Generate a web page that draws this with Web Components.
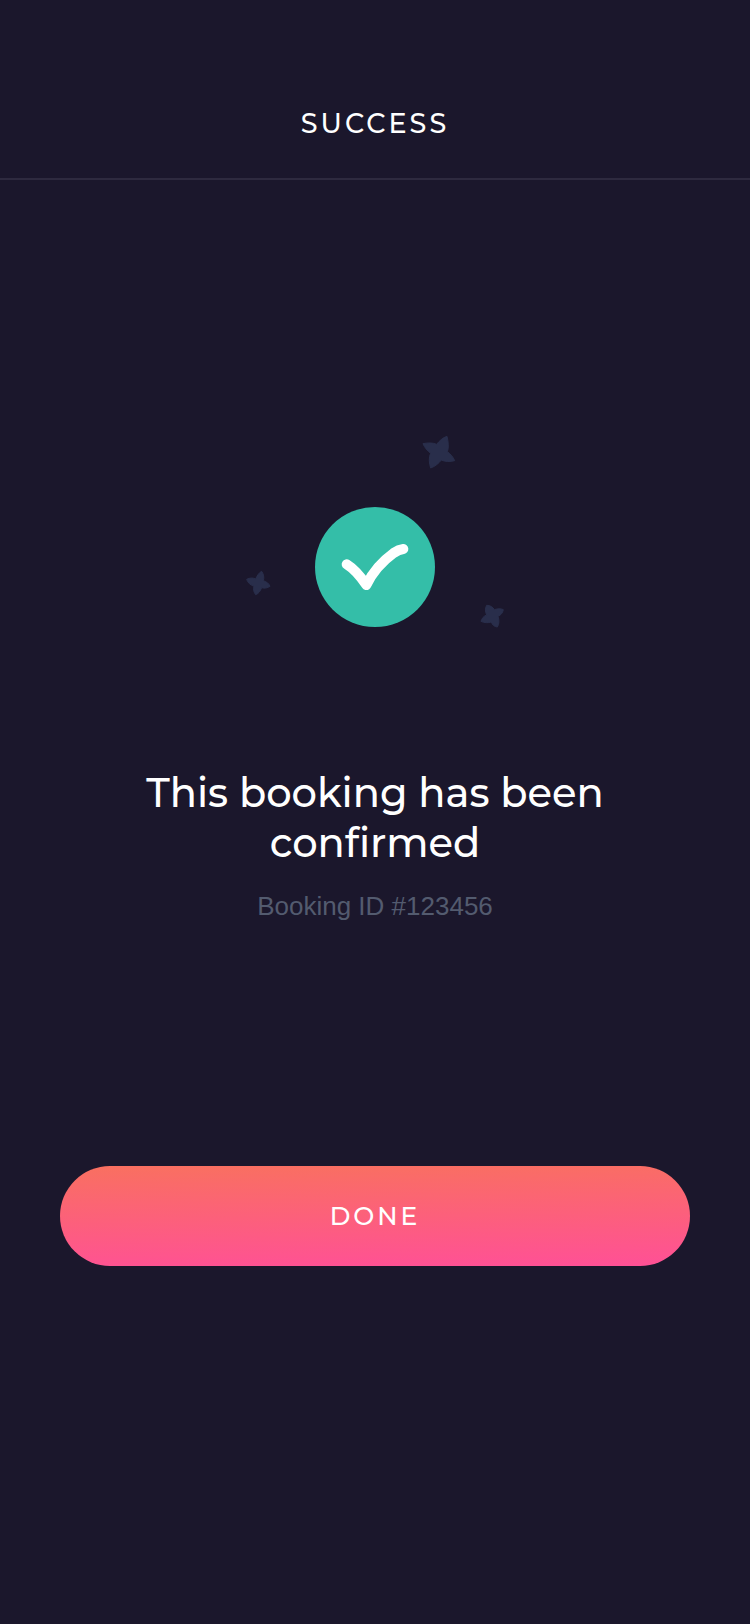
<!DOCTYPE html>
<html lang="en">
<head>
<meta charset="utf-8">
<meta name="viewport" content="width=device-width, initial-scale=1">
<title>Success</title>
<style>
html { background: #1b172c; }
body { margin: 0; color: #fff; font-family: Montserrat, Inter, sans-serif; }
</style>
</head>
<body>
<booking-success>
  <app-header slot="header">SUCCESS</app-header>
  <success-mark></success-mark>
  <booking-message>This booking has been confirmed<span slot="detail">Booking ID #123456</span></booking-message>
  <action-button slot="action">DONE</action-button>
</booking-success>
<script>
const define = (name, markup) => {
  const template = document.createElement('template');
  template.innerHTML = markup;
  customElements.define(name, class extends HTMLElement {
    constructor() {
      super();
      this.attachShadow({ mode: 'open' }).append(template.content.cloneNode(true));
    }
  });
};

define('booking-success', `
<style>
:host { display: flex; flex-direction: column; min-height: 100vh; }
main { display: flex; flex-direction: column; padding: 255px 60px 60px; }
.action { margin-top: 240px; }
</style>
<slot name="header"></slot>
<main><slot></slot><div class="action"><slot name="action"></slot></div></main>`);

define('app-header', `
<style>
:host { display: block; }
header { padding: 104px 60px 34px; border-bottom: 2px solid #2e2a3f; text-align: center; }
h1 { margin: 0; font-size: 27px; line-height: 40px; font-weight: 500; letter-spacing: 3px; }
</style>
<header><h1><slot></slot></h1></header>`);

define('success-mark', `
<style>
:host { display: block; align-self: center; width: 260px; }
svg { display: block; width: 100%; height: auto; }
</style>
<svg viewBox="0 0 260 194" role="img" aria-label="Confirmed">
  <g fill="#292e4b" stroke="#292e4b" stroke-width="3" stroke-linejoin="round">
    <path transform="translate(165 -10) scale(.33333)" d="M39 56C52 53 70 53 80 58C88 48 98 38 111 34C115 50 117 70 112 80C123 88 129 96 134 107C120 111 104 110 94 105C86 115 76 124 62 129C57 115 56 95 62 85C52 77 44 68 39 56Z"/>
    <path transform="translate(-10 125) scale(.33333)" d="M35 58C45 53 55 53 62 57C67 46 72 38 80 34C86 42 88 53 85 62C96 66 102 71 105 79C97 84 88 86 80 83C76 93 71 101 62 104C56 96 54 87 57 79C46 75 38 68 35 58Z"/>
    <path transform="translate(225 160) scale(.33333)" d="M50 31C60 31 69 36 73 44C83 41 92 40 100 44C98 54 93 60 84 64C88 75 88 87 82 96C73 95 67 90 64 81C54 84 43 84 33 79C36 70 41 63 50 60C45 49 45 40 50 31Z"/>
  </g>
  <circle cx="130" cy="132" r="60" fill="#34bea8"/>
  <path transform="translate(60 62) scale(.33333)" d="M125 202Q154 220 184 264Q212 207 266 168Q281 158 295 156" fill="none" stroke="#fff" stroke-width="30" stroke-linecap="round" stroke-linejoin="round"/>
</svg>`);

define('booking-message', `
<style>
:host { display: block; align-self: center; max-width: 520px; margin-top: 139px; text-align: center; }
h2 { margin: 0; font-size: 40px; line-height: 50px; font-weight: 500; font-variant-ligatures: none; }
p { margin: 18px 0 0; color: #535b6f; font-family: "Liberation Sans", Arial, sans-serif; font-size: 26px; line-height: 40px; }
</style>
<h2><slot></slot></h2>
<p><slot name="detail"></slot></p>`);

define('action-button', `
<style>
:host { display: block; }
button { display: block; width: 100%; padding: 30px; border: 0; border-radius: 50px; color: #fff; background: linear-gradient(179deg, #f97060, #ff5096); font: inherit; font-size: 25px; line-height: 40px; font-weight: 500; letter-spacing: 3px; cursor: pointer; }
</style>
<button type="button"><slot></slot></button>`);
</script>
</body>
</html>
